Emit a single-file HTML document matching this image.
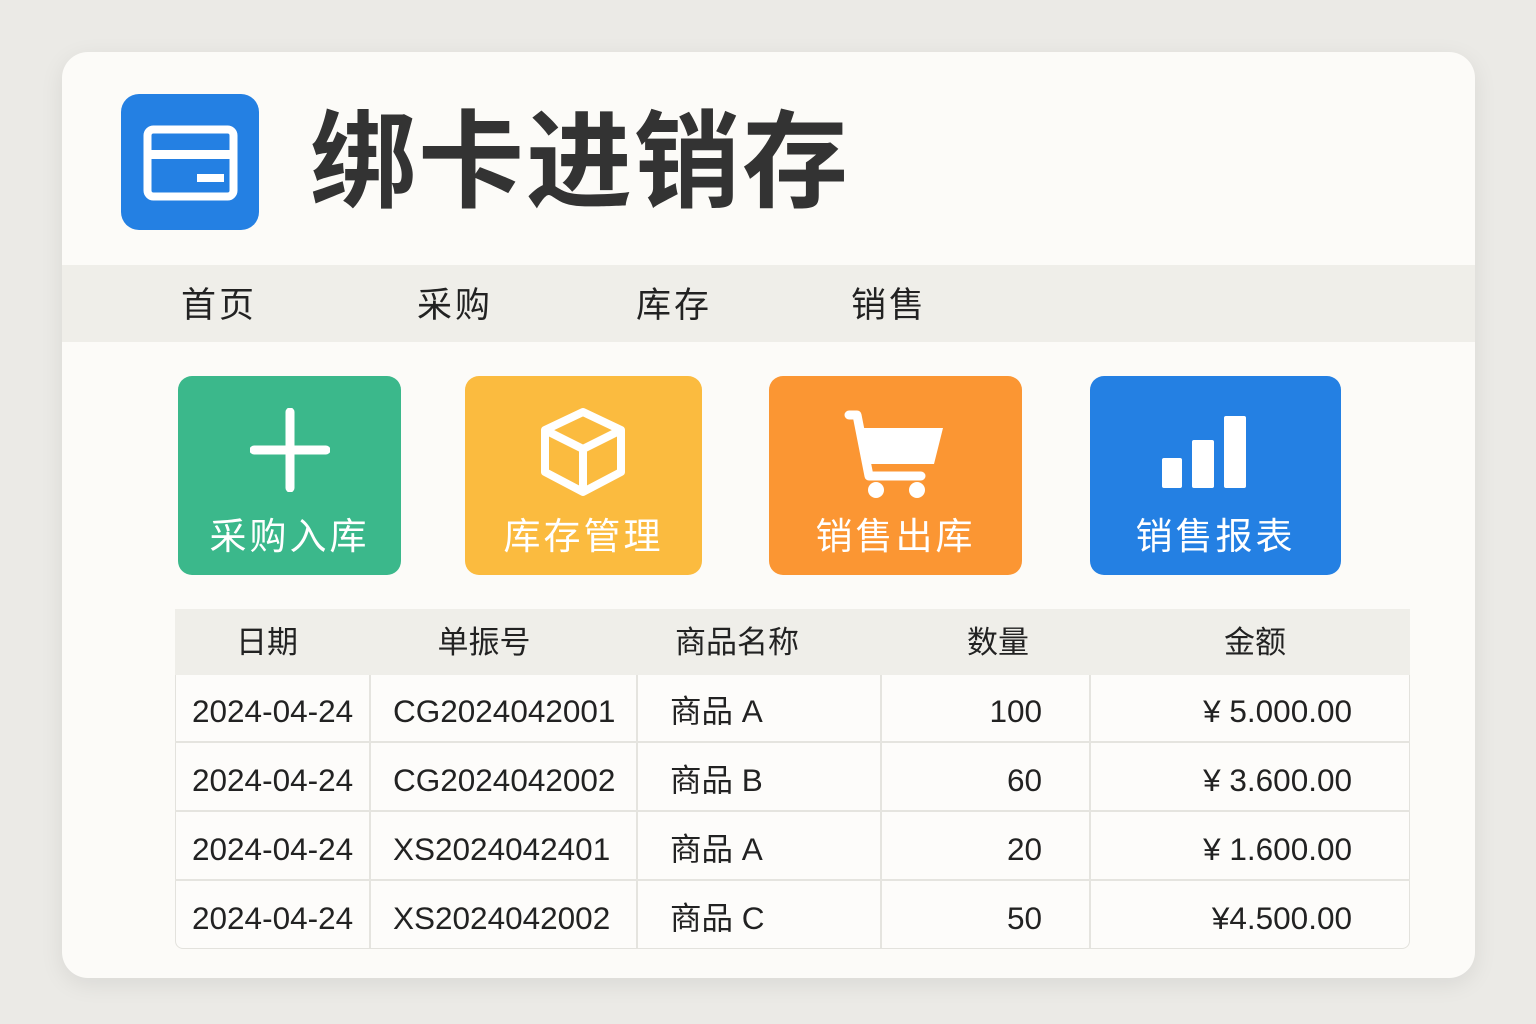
<!DOCTYPE html>
<html><head><meta charset="utf-8"><style>
*{margin:0;padding:0;box-sizing:border-box}
body{width:1536px;height:1024px;background:#ebeae6;position:relative;overflow:hidden;font-family:"Liberation Sans","Noto Sans CJK SC",sans-serif;color:#222}
.card{position:absolute;left:62px;top:52px;width:1413px;height:926px;background:#fcfbf8;border-radius:26px;box-shadow:0 6px 24px rgba(0,0,0,.08);overflow:hidden}
.a{position:absolute}
.logo{left:121px;top:94px;width:138px;height:136px;background:#2480e3;border-radius:18px}
.title{left:310px;top:88px;font-size:106px;font-weight:bold;color:#333;letter-spacing:2px;line-height:130px;font-family:"Noto Sans CJK SC",sans-serif}
.nav{left:62px;top:265px;width:1413px;height:77px;background:#efeee9}
.nv{top:283px;font-size:35px;color:#222;line-height:46px;letter-spacing:3px}
.tile{top:376px;height:199px;border-radius:14px}
.tl{position:absolute;left:0;right:0;top:512px;text-align:center;font-size:37px;color:#fff;line-height:50px;letter-spacing:3px}
.tbl{left:175px;top:609px;width:1235px;height:340px;border:1px solid #e3e2dd;border-radius:8px;overflow:hidden;background:#fdfcfa}
.th{left:175px;top:609px;width:1235px;height:66px;background:#efeee9}
.h{top:621px;font-size:31px;line-height:44px;color:#222;text-align:center}
.r{font-size:31.5px;line-height:40px;color:#222}
.vl{width:2px;background:#e5e4df;top:675px;height:273px}
.hl{height:2px;background:#e5e4df;left:175px;width:1235px}
</style></head><body>
<div class="card"></div>
<div class="a logo"><svg width="138" height="136"><rect x="26.5" y="35.5" width="86" height="67" rx="6" fill="none" stroke="#fff" stroke-width="8"/><rect x="26" y="56" width="88" height="9" fill="#fff"/><rect x="76" y="80" width="27" height="8" fill="#fff"/></svg></div>
<div class="a title">绑卡进销存</div>
<div class="a nav"></div>
<div class="a nv" style="left:181px">首页</div>
<div class="a nv" style="left:417px">采购</div>
<div class="a nv" style="left:636px">库存</div>
<div class="a nv" style="left:851px">销售</div>

<div class="a tile" style="left:178px;width:223px;background:#3bb88b"><svg class="a" style="left:72px;top:32px" width="80" height="84"><path d="M40 4V80M4 42H76" stroke="#fff" stroke-width="9" stroke-linecap="round"/></svg></div>
<div class="a tile" style="left:465px;width:237px;background:#fbbb3f"><svg class="a" style="left:70px;top:30px" width="96" height="92"><path d="M48 6L86 24V66L48 86L10 66V24Z M10 24L48 43L86 24 M48 43V86" fill="none" stroke="#fff" stroke-width="8" stroke-linejoin="round"/></svg></div>
<div class="a tile" style="left:769px;width:253px;background:#fb9633"><svg class="a" style="left:74px;top:30px" width="104" height="94"><path d="M6 9H14L26 70H78" fill="none" stroke="#fff" stroke-width="9" stroke-linecap="round" stroke-linejoin="round"/><path d="M18 22H100L91 58H26Z" fill="#fff"/><circle cx="33" cy="84" r="8" fill="#fff"/><circle cx="74" cy="84" r="8" fill="#fff"/></svg></div>
<div class="a tile" style="left:1090px;width:251px;background:#2480e3"><svg class="a" style="left:70px;top:38px" width="100" height="76"><rect x="2" y="44" width="20" height="30" rx="2" fill="#fff"/><rect x="32" y="26" width="22" height="48" rx="2" fill="#fff"/><rect x="64" y="2" width="22" height="72" rx="2" fill="#fff"/></svg></div>
<div class="tl" style="left:178px;width:223px;right:auto">采购入库</div>
<div class="tl" style="left:465px;width:237px;right:auto">库存管理</div>
<div class="tl" style="left:769px;width:253px;right:auto">销售出库</div>
<div class="tl" style="left:1090px;width:251px;right:auto">销售报表</div>

<div class="a tbl"></div>
<div class="a th"></div>
<div class="a h" style="left:200px;width:134px">日期</div>
<div class="a h" style="left:400px;width:168px">单振号</div>
<div class="a h" style="left:660px;width:154px">商品名称</div>
<div class="a h" style="left:940px;width:116px">数量</div>
<div class="a h" style="left:1190px;width:130px">金额</div>
<div class="a vl" style="left:369px"></div>
<div class="a vl" style="left:636px"></div>
<div class="a vl" style="left:880px"></div>
<div class="a vl" style="left:1089px"></div>
<div class="a hl" style="top:741px"></div>
<div class="a hl" style="top:810px"></div>
<div class="a hl" style="top:879px"></div>

<div class="a r" style="left:192px;top:691px">2024-04-24</div>
<div class="a r" style="left:393px;top:691px">CG2024042001</div>
<div class="a r" style="left:670px;top:691px">商品 A</div>
<div class="a r" style="left:900px;width:142px;text-align:right;top:691px">100</div>
<div class="a r" style="left:1100px;width:252px;text-align:right;top:691px">¥ 5.000.00</div>

<div class="a r" style="left:192px;top:760px">2024-04-24</div>
<div class="a r" style="left:393px;top:760px">CG2024042002</div>
<div class="a r" style="left:670px;top:760px">商品 B</div>
<div class="a r" style="left:900px;width:142px;text-align:right;top:760px">60</div>
<div class="a r" style="left:1100px;width:252px;text-align:right;top:760px">¥ 3.600.00</div>

<div class="a r" style="left:192px;top:829px">2024-04-24</div>
<div class="a r" style="left:393px;top:829px">XS2024042401</div>
<div class="a r" style="left:670px;top:829px">商品 A</div>
<div class="a r" style="left:900px;width:142px;text-align:right;top:829px">20</div>
<div class="a r" style="left:1100px;width:252px;text-align:right;top:829px">¥ 1.600.00</div>

<div class="a r" style="left:192px;top:898px">2024-04-24</div>
<div class="a r" style="left:393px;top:898px">XS2024042002</div>
<div class="a r" style="left:670px;top:898px">商品 C</div>
<div class="a r" style="left:900px;width:142px;text-align:right;top:898px">50</div>
<div class="a r" style="left:1100px;width:252px;text-align:right;top:898px">¥4.500.00</div>
</body></html>
